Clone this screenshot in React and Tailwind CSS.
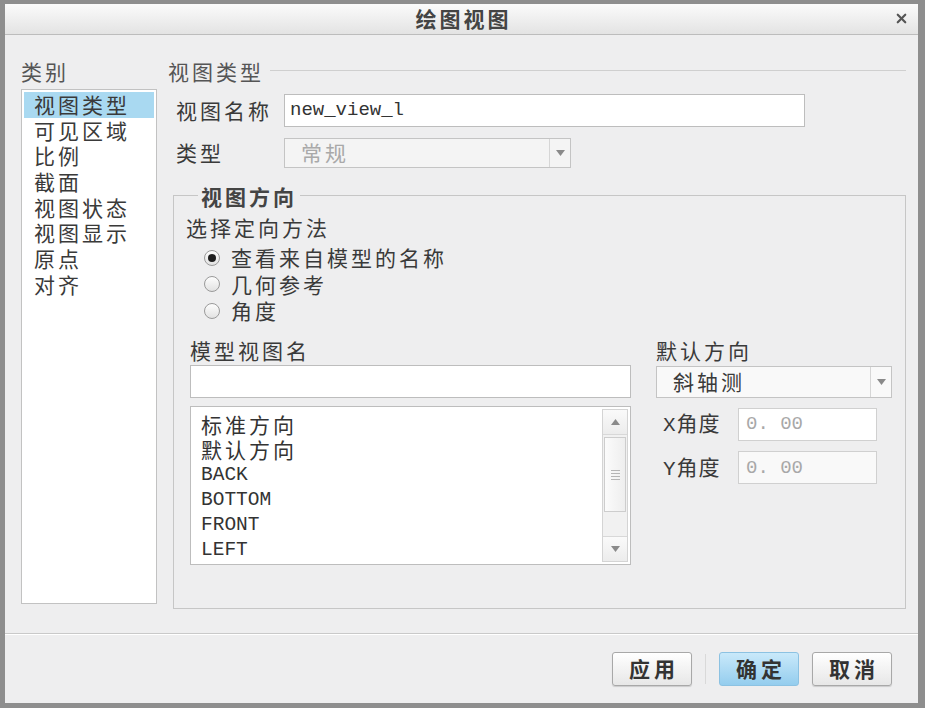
import React from "react";
import { X } from "lucide-react";

const cjk = { fontFamily: '"Noto Sans CJK SC", "Liberation Sans", sans-serif' };
const mono = { fontFamily: '"Liberation Mono", "Noto Sans CJK SC", monospace' };

function Arrow({ up }) {
  return (
    <svg width="9" height="6" viewBox="0 0 9 6">
      <path d={up ? "M0 6 L4.5 0 L9 6 Z" : "M0 0 L4.5 6 L9 0 Z"} fill="#8a8a8a" />
    </svg>
  );
}

function Select({ value, width, height, disabled }) {
  return (
    <div
      className={`flex border border-[#c4c4c4] ${disabled ? "bg-[#f4f4f4]" : "bg-[#f9f9f9]"}`}
      style={{ width, height }}
    >
      <div
        className={`flex-1 flex items-center pl-[16px] text-[21px] tracking-[3px] ${
          disabled ? "text-[#a9a9a9]" : "text-[#3a3a3a]"
        }`}
      >
        {value}
      </div>
      <div className="w-[21px] border-l border-[#d6d6d6] flex items-center justify-center">
        <Arrow />
      </div>
    </div>
  );
}

function Radio({ checked, label }) {
  return (
    <div className="h-[26.5px] flex items-center">
      <div className="w-[16px] h-[16px] rounded-full border border-[#9a9a9a] bg-gradient-to-b from-[#fdfdfd] to-[#e2e2e2] flex items-center justify-center">
        {checked && <div className="w-[8px] h-[8px] rounded-full bg-[#1f1f1f]" />}
      </div>
      <span className="ml-[11px] text-[21px] tracking-[3px] text-[#3a3a3a]">{label}</span>
    </div>
  );
}

function Button({ label, primary }) {
  return (
    <button
      className={`w-[80px] h-[34px] rounded-[3px] border text-[21px] font-bold tracking-[4px] pl-[4px] text-[#333] ${
        primary
          ? "border-[#8cc2e2] bg-gradient-to-b from-[#c9e9fa] to-[#94cdee]"
          : "border-[#a8a8a8] bg-gradient-to-b from-[#ffffff] to-[#e7e7e7] shadow-[0_1px_1px_rgba(0,0,0,0.15)]"
      }`}
    >
      {label}
    </button>
  );
}

export default function App() {
  const categories = ["视图类型", "可见区域", "比例", "截面", "视图状态", "视图显示", "原点", "对齐"];

  return (
    <div
      className="w-[925px] h-[708px] bg-[#eeeeef] border-[#8e8e8e] border-l-[5px] border-r-[7px] border-t-[4px] border-b-[5px] flex flex-col text-[#3a3a3a]"
      style={cjk}
    >
      {/* title bar */}
      <div className="h-[31px] shrink-0 bg-gradient-to-b from-[#fbfbfb] to-[#e3e3e3] border-b border-[#bcbcbc] flex items-center relative">
        <div className="flex-1 text-center text-[21px] font-bold tracking-[3px] text-[#444] pl-[4px]">绘图视图</div>
        <X className="absolute right-[9px] top-[7px] text-[#555]" size={15} strokeWidth={3.5} />
      </div>

      {/* body */}
      <div className="h-[598px] shrink-0 flex pl-[16px] pt-[24px]">
        {/* categories */}
        <div className="w-[136px] flex flex-col">
          <div className="h-[24px] leading-[24px] text-[21px] tracking-[3px] text-[#555]">类别</div>
          <div className="mt-[6px] h-[515px] bg-white border border-[#c2c2c2] p-[2px]">
            {categories.map((c, i) => (
              <div
                key={c}
                className={`h-[25.7px] leading-[25.7px] pl-[10px] text-[21px] tracking-[3px] ${
                  i === 0 ? "bg-[#a9d9f1]" : ""
                }`}
              >
                {c}
              </div>
            ))}
          </div>
        </div>

        {/* main */}
        <div className="ml-[11px] w-[738px] flex flex-col">
          <div className="h-[24px] flex items-center">
            <span className="text-[21px] tracking-[3px] text-[#555] leading-[24px]">视图类型</span>
            <div className="flex-1 ml-[6px] mt-[-2px] h-px bg-[#cfcfcf]" />
          </div>

          <div className="mt-[11px] flex items-center pl-[8px]">
            <span className="w-[108px] text-[21px] tracking-[3px]">视图名称</span>
            <div className="w-[521px] h-[33px] bg-white border border-[#bdbdbd] flex items-center pl-[5px] text-[19px] text-[#333]" style={mono}>
              new_view_l
            </div>
          </div>

          <div className="mt-[10px] flex items-center pl-[8px]">
            <span className="w-[108px] text-[21px] tracking-[3px]">类型</span>
            <Select value="常规" width={287} height={30} disabled />
          </div>

          <fieldset className="mt-[15px] ml-[5px] w-[733px] h-[425px] border border-[#c6c6c6] pl-[12px]">
            <legend className="ml-[12px] px-[3px] h-[24px] leading-[24px] text-[21px] font-bold tracking-[3px] text-[#444]">
              视图方向
            </legend>
            <div className="mt-[7px] h-[24px] leading-[24px] text-[21px] tracking-[3px]">选择定向方法</div>
            <div className="mt-[6px] pl-[18px] flex flex-col">
              <Radio checked label="查看来自模型的名称" />
              <Radio label="几何参考" />
              <Radio label="角度" />
            </div>

            <div className="mt-[14px] ml-[4px] flex">
              {/* model view names */}
              <div className="w-[441px] flex flex-col">
                <div className="h-[24px] leading-[24px] text-[21px] tracking-[3px]">模型视图名</div>
                <div className="mt-[3px] h-[33px] bg-white border border-[#bdbdbd]" />
                <div className="mt-[8px] h-[159px] bg-white border border-[#bdbdbd] flex">
                  <div className="flex-1 pt-[5px] pl-[10px] text-[#333]">
                    <div className="h-[25.3px] leading-[25.3px] text-[21px] tracking-[3px]">标准方向</div>
                    <div className="h-[25.3px] leading-[25.3px] text-[21px] tracking-[3px]">默认方向</div>
                    {["BACK", "BOTTOM", "FRONT", "LEFT"].map((t) => (
                      <div key={t} className="h-[25.3px] leading-[25.3px] text-[19.5px]" style={mono}>
                        {t}
                      </div>
                    ))}
                  </div>
                  <div className="w-[26px] my-[2px] mr-[2px] border border-[#d4d4d4] bg-[#f1f1f1] flex flex-col">
                    <div className="h-[25px] flex items-center justify-center border-b border-[#d8d8d8] bg-gradient-to-b from-[#fafafa] to-[#ececec]">
                      <Arrow up />
                    </div>
                    <div className="mt-[2px] mx-[1px] h-[75px] border border-[#cdcdcd] bg-gradient-to-r from-[#fbfbfb] to-[#eeeeee] flex flex-col items-center justify-center gap-[2px]">
                      {[0, 1, 2, 3].map((k) => (
                        <div key={k} className="w-[9px] h-px bg-[#b5b5b5]" />
                      ))}
                    </div>
                    <div className="flex-1" />
                    <div className="h-[25px] flex items-center justify-center border-t border-[#d8d8d8] bg-gradient-to-b from-[#fafafa] to-[#ececec]">
                      <Arrow />
                    </div>
                  </div>
                </div>
              </div>

              {/* default orientation */}
              <div className="ml-[25px] w-[236px] flex flex-col">
                <div className="h-[24px] leading-[24px] text-[21px] tracking-[3px]">默认方向</div>
                <div className="mt-[4px]">
                  <Select value="斜轴测" width={236} height={32} />
                </div>
                <div className="mt-[9px] flex items-center pl-[7px]">
                  <span className="w-[75px] text-[21px] tracking-[1px]">
                    <span style={mono}>X</span>角度
                  </span>
                  <div className="w-[139px] h-[33px] bg-white border border-[#d0d0d0] flex items-center pl-[7px] text-[19px] text-[#a8a8a8]" style={mono}>
                    0. 00
                  </div>
                </div>
                <div className="mt-[9px] flex items-center pl-[7px]">
                  <span className="w-[75px] text-[21px] tracking-[1px]">
                    <span style={mono}>Y</span>角度
                  </span>
                  <div className="w-[139px] h-[33px] bg-[#f9f9f9] border border-[#d0d0d0] flex items-center pl-[7px] text-[19px] text-[#a8a8a8]" style={mono}>
                    0. 00
                  </div>
                </div>
              </div>
            </div>
          </fieldset>
        </div>
      </div>

      {/* footer */}
      <div className="flex-1 border-t border-[#c9c9c9] shadow-[inset_0_1px_0_#ffffff] flex items-start justify-end pt-[18px] pr-[26px]">
        <Button label="应用" />
        <div className="mx-[13px] mt-[2px] w-px h-[30px] bg-[#d9d9d9]" />
        <Button label="确定" primary />
        <div className="w-[13px]" />
        <Button label="取消" />
      </div>
    </div>
  );
}
